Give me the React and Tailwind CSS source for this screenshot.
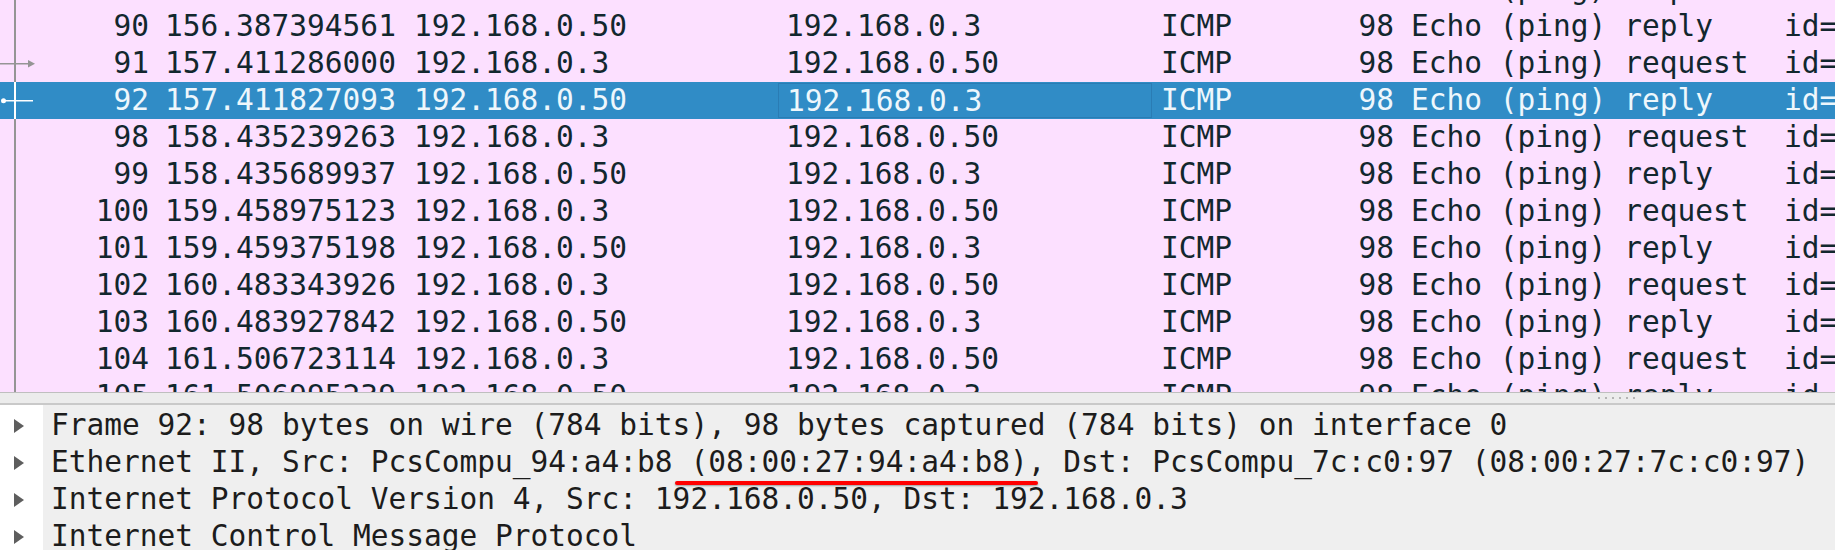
import React from "react";

const packets = [
    { no: 89, time: "156.386832541", src: "192.168.0.3", dst: "192.168.0.50", kind: "request" },
    { no: 90, time: "156.387394561", src: "192.168.0.50", dst: "192.168.0.3", kind: "reply" },
    { no: 91, time: "157.411286000", src: "192.168.0.3", dst: "192.168.0.50", kind: "request", mark: "arrow" },
    { no: 92, time: "157.411827093", src: "192.168.0.50", dst: "192.168.0.3", kind: "reply", selected: true },
    { no: 98, time: "158.435239263", src: "192.168.0.3", dst: "192.168.0.50", kind: "request" },
    { no: 99, time: "158.435689937", src: "192.168.0.50", dst: "192.168.0.3", kind: "reply" },
    { no: 100, time: "159.458975123", src: "192.168.0.3", dst: "192.168.0.50", kind: "request" },
    { no: 101, time: "159.459375198", src: "192.168.0.50", dst: "192.168.0.3", kind: "reply" },
    { no: 102, time: "160.483343926", src: "192.168.0.3", dst: "192.168.0.50", kind: "request" },
    { no: 103, time: "160.483927842", src: "192.168.0.50", dst: "192.168.0.3", kind: "reply" },
    { no: 104, time: "161.506723114", src: "192.168.0.3", dst: "192.168.0.50", kind: "request" },
    { no: 105, time: "161.506995239", src: "192.168.0.50", dst: "192.168.0.3", kind: "reply" },
];

const details = [
    "Frame 92: 98 bytes on wire (784 bits), 98 bytes captured (784 bits) on interface 0",
    "Ethernet II, Src: PcsCompu_94:a4:b8 (08:00:27:94:a4:b8), Dst: PcsCompu_7c:c0:97 (08:00:27:7c:c0:97)",
    "Internet Protocol Version 4, Src: 192.168.0.50, Dst: 192.168.0.3",
    "Internet Control Message Protocol",
];

function Related({ mark, selected }) {
    const line = selected ? "#ffffff" : "#959595";
    return (
        <svg className="absolute left-0 top-0" width="40" height="37" viewBox="0 0 40 37">
            <rect x="14" y="0" width="2" height="37" fill={line} />
            {mark === "arrow" && (
                <g fill="#959595">
                    <rect x="0" y="18" width="30" height="1.5" />
                    <polygon points="28,15 35,18.75 28,22.5" />
                </g>
            )}
            {selected && (
                <g fill="#ffffff">
                    <rect x="2" y="18" width="31" height="1.5" />
                    <circle cx="3.5" cy="18.75" r="2.5" />
                </g>
            )}
        </svg>
    );
}

function PacketRow({ p }) {
    const info = p.kind === "request"
        ? "Echo (ping) request  id=0x0a7f, seq=" + p.no + "/" + p.no * 256 + ", ttl=64"
        : "Echo (ping) reply    id=0x0a7f, seq=" + p.no + "/" + p.no * 256 + ", ttl=64";
    return (
        <div className={"flex h-[37px] whitespace-pre " + (p.selected ? "bg-[#308cc6] text-[#eef7fc]" : "text-[#12272e]")}>
            <div className="relative w-[157px] shrink-0 pr-[8px] text-right">
                <Related mark={p.mark} selected={p.selected} />
                {p.no}
            </div>
            <div className="w-[249px] shrink-0 pl-[8px]">{p.time}</div>
            <div className="w-[372px] shrink-0 pl-[8px]">{p.src}</div>
            <div className="w-[374px] shrink-0 py-[1px]">
                <div className={"h-full pl-[8px] leading-[35px] " + (p.selected ? "border border-[#2a7cb4] pl-[7px]" : "")}>{p.dst}</div>
            </div>
            <div className="w-[148px] shrink-0 pl-[9px]">ICMP</div>
            <div className="w-[101px] shrink-0 pr-[7px] text-right">98</div>
            <div className="pl-[10px]">{info}</div>
        </div>
    );
}

export default function App() {
    return (
        <div className="relative w-[1835px] h-[550px] overflow-hidden bg-[#efefef] font-['DejaVu_Sans_Mono',monospace] text-[29.5px] leading-[37px]">
            <div className="h-[392px] overflow-hidden bg-[#fce0ff]">
                <div className="-mt-[29px]">
                    {packets.map((p) => (
                        <PacketRow key={p.no} p={p} />
                    ))}
                </div>
            </div>

            <div className="h-[13px] bg-[#ececec] border-t border-[#bfbfbf] border-b-2 border-b-[#c9c9c9] flex items-center">
                <div className="ml-[1598px] flex gap-[5px]">
                    {[0, 1, 2, 3, 4, 5].map((i) => (
                        <div key={i} className="w-[2px] h-[2px] bg-[#b4b4b4]" />
                    ))}
                </div>
            </div>

            <div className="flex h-[145px]">
                <div className="w-[43px] shrink-0 bg-white pt-[2px]">
                    {details.map((d, i) => (
                        <div key={i} className="h-[37px] flex items-center pl-[14px]">
                            <svg width="11" height="14" viewBox="0 0 11 14">
                                <polygon points="0,0 10,7 0,14" fill="#5e5e5e" />
                            </svg>
                        </div>
                    ))}
                </div>
                <div className="flex-1 pt-[2px] pl-[8px] text-[#1c1c1c] whitespace-pre">
                    {details.map((d, i) => (
                        <div key={i} className="h-[37px]">{d}</div>
                    ))}
                </div>
            </div>

            <div className="absolute left-[675px] top-[481px] w-[363px] h-[4px] rounded-full bg-[#ff0000] shadow-[0_1px_2px_rgba(0,0,0,0.35)]" />
        </div>
    );
}
